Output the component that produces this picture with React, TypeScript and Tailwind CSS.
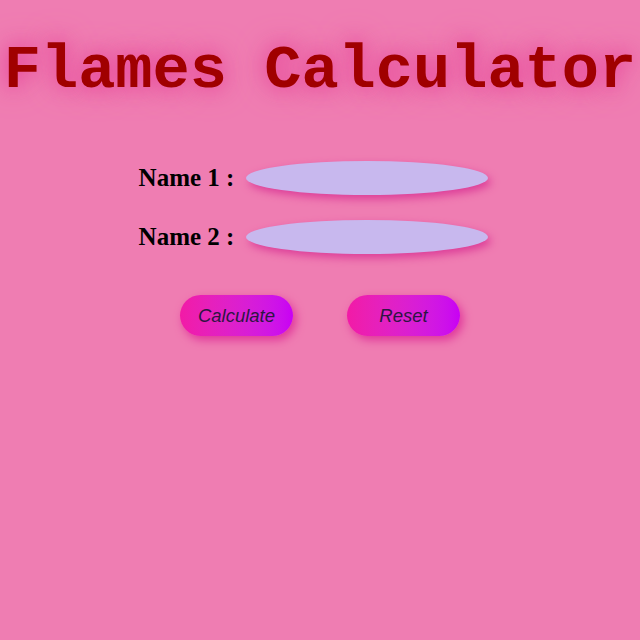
import React, { useState } from 'react';

const App: React.FC = () => {
  const [name1, setName1] = useState('');
  const [name2, setName2] = useState('');

  const reset = () => {
    setName1('');
    setName2('');
  };

  return (
    <div className="min-h-[640px] w-full bg-[#ef7db2] overflow-hidden">
      <h1 className="pt-[36px] text-center whitespace-nowrap font-['Courier_New','Liberation_Mono',monospace] font-bold text-[62px] leading-[70px] text-[#a00000] [text-shadow:0_0_18px_#e84c9c,0_0_30px_#e8569f]">
        Flames Calculator
      </h1>

      <div className="mt-[55px] flex flex-col items-center gap-[25px] pr-[13px]">
        {/* name inputs */}
        <div className="flex h-[34px] items-center gap-[12px]">
          <label className="font-['Liberation_Serif','Times_New_Roman',serif] font-bold text-[25px] leading-[34px] text-black">
            Name 1 :
          </label>
          <input
            value={name1}
            onChange={(e) => setName1(e.target.value)}
            className="w-[242px] h-[34px] rounded-[50%] bg-[#c8b8ee] outline-none px-4 shadow-[3px_4px_9px_#dc3d98]"
          />
        </div>
        <div className="flex h-[34px] items-center gap-[12px]">
          <label className="font-['Liberation_Serif','Times_New_Roman',serif] font-bold text-[25px] leading-[34px] text-black">
            Name 2 :
          </label>
          <input
            value={name2}
            onChange={(e) => setName2(e.target.value)}
            className="w-[242px] h-[34px] rounded-[50%] bg-[#c8b8ee] outline-none px-4 shadow-[3px_4px_9px_#dc3d98]"
          />
        </div>
      </div>

      <div className="mt-[41px] flex justify-center gap-[54px]">
        <button className="w-[113px] h-[41px] rounded-full bg-gradient-to-r from-[#f21aa6] to-[#c800f4] font-['Liberation_Sans',Arial,sans-serif] italic text-[18.5px] text-[#2e1542] shadow-[3px_4px_10px_#e0359a]">
          Calculate
        </button>
        <button
          onClick={reset}
          className="w-[113px] h-[41px] rounded-full bg-gradient-to-r from-[#f21aa6] to-[#c800f4] font-['Liberation_Sans',Arial,sans-serif] italic text-[18.5px] text-[#2e1542] shadow-[3px_4px_10px_#e0359a]"
        >
          Reset
        </button>
      </div>
    </div>
  );
};

export default App;
